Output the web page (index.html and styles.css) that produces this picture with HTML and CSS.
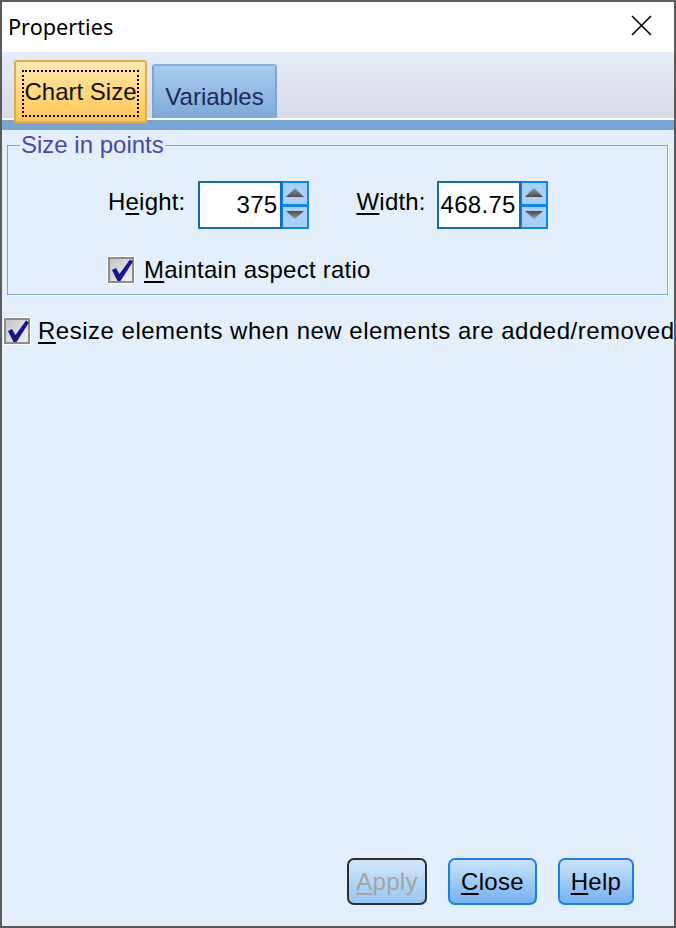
FILE: index.html
```html
<!DOCTYPE html>
<html>
<head>
<meta charset="utf-8">
<link rel="stylesheet" href="styles.css">
</head>
<body>
<div class="window">
  <div class="titlebar">
    <span class="title">Properties</span>
    <svg class="close-x" width="21" height="21" viewBox="0 0 21 21"><path d="M1 1 L20 20 M20 1 L1 20" stroke="#000" stroke-width="1.6" fill="none"/></svg>
  </div>
  <div class="tabstrip">
    <div class="tab tab-active"><span class="focus">Chart Size</span></div>
    <div class="tab tab-inactive">Variables</div>
  </div>
  <div class="bluebar"></div>
  <div class="content">
    <fieldset class="group">
      <legend>Size in points</legend>
      <div class="size-row">
        <span class="label">H<u>e</u>ight:</span>
        <div class="spin">
          <div class="num">375</div>
          <svg class="spinner" width="27" height="48" viewBox="0 0 27 48">
            <defs>
              <linearGradient id="ga" x1="0" y1="0" x2="0" y2="1"><stop offset="0" stop-color="#9a9a9a"/><stop offset="1" stop-color="#4a4a4a"/></linearGradient>
              <linearGradient id="gb" x1="0" y1="0" x2="0" y2="1"><stop offset="0" stop-color="#4a4a4a"/><stop offset="1" stop-color="#9a9a9a"/></linearGradient>
            </defs>
            <rect x="0" y="0" width="27" height="48" fill="#0b86f0"/>
            <rect x="1" y="2" width="24" height="21" fill="#a8d0f9"/>
            <rect x="1" y="26" width="24" height="20" fill="#a8d0f9"/>
            <path d="M4 16 L22 16 L13 7 Z" fill="url(#ga)"/>
            <path d="M4 30 L22 30 L13 38 Z" fill="url(#gb)"/>
          </svg>
        </div>
        <span class="label label-w"><u>W</u>idth:</span>
        <div class="spin">
          <div class="num">468.75</div>
          <svg class="spinner" width="27" height="48" viewBox="0 0 27 48">
            <rect x="0" y="0" width="27" height="48" fill="#0b86f0"/>
            <rect x="1" y="2" width="24" height="21" fill="#a8d0f9"/>
            <rect x="1" y="26" width="24" height="20" fill="#a8d0f9"/>
            <path d="M4 16 L22 16 L13 7 Z" fill="url(#ga)"/>
            <path d="M4 30 L22 30 L13 38 Z" fill="url(#gb)"/>
          </svg>
        </div>
      </div>
      <div class="check-row inner">
        <svg class="checkbox" width="28" height="28" viewBox="0 0 28 28">
          <defs>
            <linearGradient id="gc" x1="0" y1="0" x2="1" y2="1"><stop offset="0" stop-color="#c4c4c4"/><stop offset="1" stop-color="#f2f2f2"/></linearGradient>
          </defs>
          <rect x="0" y="0" width="28" height="28" fill="#ffffff"/>
          <rect x="1" y="1" width="26" height="26" fill="#8c8c8c"/>
          <rect x="3" y="3" width="22" height="22" fill="url(#gc)"/>
          <path d="M5 14 L9 12 L12.5 18 L23 3.5 L26 5.5 L13.5 25 L10.5 25 Z" fill="#15168e"/>
        </svg>
        <span class="ctext"><u>M</u>aintain aspect ratio</span>
      </div>
    </fieldset>
    <div class="check-row outer">
      <svg class="checkbox" width="28" height="28" viewBox="0 0 28 28">
        <rect x="0" y="0" width="28" height="28" fill="#ffffff"/>
        <rect x="1" y="1" width="26" height="26" fill="#8c8c8c"/>
        <rect x="3" y="3" width="22" height="22" fill="url(#gc)"/>
        <path d="M5 14 L9 12 L12.5 18 L23 3.5 L26 5.5 L13.5 25 L10.5 25 Z" fill="#15168e"/>
      </svg>
      <span class="ctext resize"><u>R</u>esize elements when new elements are added/removed</span>
    </div>
    <div class="buttons">
      <div class="btn btn-disabled btn-apply"><u>A</u>pply</div>
      <div class="btn btn-close"><u>C</u>lose</div>
      <div class="btn btn-help"><u>H</u>elp</div>
    </div>
  </div>
</div>
</body>
</html>
```
FILE: styles.css
```css
html, body {
  margin: 0;
  padding: 0;
  overflow: hidden;
}

.window {
  width: 676px;
  height: 928px;
  box-sizing: border-box;
  border: 2px solid #5b5b5b;
  display: flex;
  flex-direction: column;
  background: #e3effb;
  font-family: "Liberation Sans", Arial, sans-serif;
  font-size: 24px;
  line-height: 28px;
  color: #000;
  overflow: hidden;
}

.titlebar {
  height: 50px;
  flex: none;
  background: #fff;
  display: flex;
  align-items: center;
  justify-content: space-between;
  padding: 0 22px 0 6px;
}

.title {
  font-family: "Noto Sans", sans-serif;
  font-size: 21.7px;
  line-height: 28px;
  color: #000;
}

.close-x {
  display: block;
  margin-top: -4px;
}

.tabstrip {
  height: 66px;
  flex: none;
  background: linear-gradient(#e4eef9, #dbd9e7);
  border-bottom: 2px solid #fff;
  display: flex;
  align-items: flex-end;
  padding-left: 12px;
  gap: 5px;
}

.tab {
  box-sizing: border-box;
  border-radius: 3px 3px 0 0;
}

.tab-active {
  position: relative;
  z-index: 1;
  width: 133px;
  height: 63px;
  margin-bottom: -5px;
  border: 2px solid #e0ae4c;
  border-left-color: #d8ab58;
  background: linear-gradient(#ffe8ae, #ffc851);
  display: flex;
}

.focus {
  flex: 1;
  margin: 8px 6px 4px 6px;
  border: 2px dotted #000;
  display: flex;
  align-items: center;
  justify-content: center;
  padding-bottom: 4px;
  white-space: nowrap;
  color: #111;
}

.tab-inactive {
  width: 125px;
  height: 54px;
  border: 2px solid #7ba7d5;
  border-top-color: #86b0dc;
  border-bottom: none;
  background: linear-gradient(#a9ccef, #7eaad8);
  display: flex;
  align-items: center;
  justify-content: center;
  padding-top: 10px;
  color: #1b2a5a;
}

.bluebar {
  height: 10px;
  flex: none;
  background: #76a6d4;
}

.content {
  flex: 1;
  display: flex;
  flex-direction: column;
  min-height: 0;
}

.group {
  margin: 1px 6px 0 5px;
  padding: 0 0 10px 0;
  border: 1px solid #7ea6d0;
  box-shadow: 1px 1px 0 #fff;
  min-width: 0;
}

.group legend {
  margin-left: 12px;
  padding: 0 1px;
  color: #4848a8;
  line-height: 28px;
}

.size-row {
  display: flex;
  align-items: center;
  margin-top: 22px;
  padding-left: 100px;
  height: 48px;
}

.label {
  white-space: nowrap;
  margin-bottom: 7px;
  letter-spacing: 0.2px;
}

.label-w {
  margin-left: 47px;
}

.spin {
  display: flex;
  margin-left: 13px;
}

.label-w + .spin {
  margin-left: 11px;
}

.num {
  width: 84px;
  height: 48px;
  box-sizing: border-box;
  border: 2px solid #1868b8;
  background: #fff;
  text-align: right;
  padding-right: 3px;
  line-height: 44px;
  letter-spacing: 0.3px;
}

.spinner {
  display: block;
}

u {
  text-decoration-thickness: 2px;
  text-underline-offset: 3px;
}

.check-row {
  display: flex;
  align-items: center;
  height: 28px;
}

.check-row.inner {
  margin-top: 27px;
  padding-left: 99px;
}

.check-row.outer {
  margin-top: 22px;
  margin-left: 1px;
}

.checkbox {
  display: block;
  flex: none;
}

.ctext {
  margin-left: 9px;
  white-space: nowrap;
  letter-spacing: 0.25px;
}

.resize {
  margin-left: 7px;
  letter-spacing: 0.5px;
}

.buttons {
  margin-top: auto;
  display: flex;
  justify-content: flex-end;
  gap: 21px;
  padding: 0 40px 21px 0;
}

.btn {
  height: 47px;
  box-sizing: border-box;
  border: 2px solid #1c80e2;
  border-radius: 7px;
  background: linear-gradient(#cbe4fb, #74b2f0);
  display: flex;
  align-items: center;
  justify-content: center;
  color: #000;
  letter-spacing: 0.3px;
}

.btn-disabled {
  border-color: #2e2e2e;
  background: linear-gradient(#d3e7fb, #98c6f2);
  color: #a4a4a4;
}

.btn-apply { width: 80px; }
.btn-close { width: 89px; }
.btn-help { width: 76px; }
```
